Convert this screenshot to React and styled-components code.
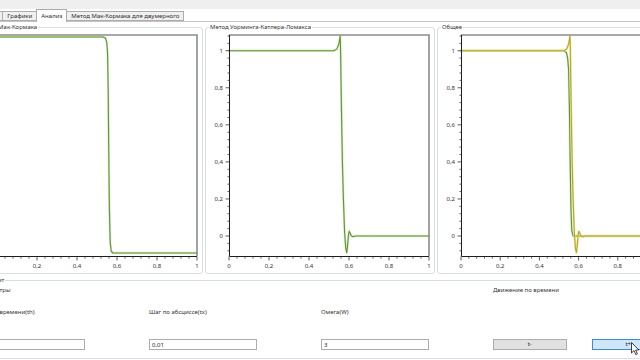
import React from 'react';
import styled, { createGlobalStyle } from 'styled-components';

const GlobalStyle = createGlobalStyle`
  html, body {
    margin: 0;
    padding: 0;
    background: #ffffff;
    overflow: hidden;
  }
  body {
    width: 640px;
    height: 360px;
    font-family: "Noto Sans", "Open Sans", sans-serif;
    color: #2e2e2e;
  }
`;

const Page = styled.div`
  width: 640px;
  height: 360px;
  overflow: hidden;
`;

// the window is wider than the shot, its left edge is cut off
const Window = styled.div`
  margin-left: -27px;
  width: 700px;
  display: flex;
  flex-direction: column;
`;

const TopBand = styled.div`
  height: 9px;
  background: #efefef;
`;

const TabStrip = styled.div`
  display: flex;
  align-items: flex-end;
  height: 12px;
  padding-left: 2px;
  background: #ffffff;
  border-bottom: 1px solid #c4c4c4;
`;

const Tab = styled.div`
  box-sizing: border-box;
  height: ${p => (p.active ? 13 : 10)}px;
  margin-left: -1px;
  margin-bottom: ${p => (p.active ? -1 : 0)}px;
  padding: ${p => (p.active ? '2px' : '0')} 4px 0;
  border: 1px solid #acacac;
  border-bottom: ${p => (p.active ? 'none' : '1px solid #acacac')};
  background: ${p => (p.active ? '#ffffff' : '#f0f0f0')};
  font-size: 6px;
  line-height: 8px;
  white-space: nowrap;
  position: relative;
  z-index: ${p => (p.active ? 1 : 0)};
`;

const Content = styled.div`
  display: flex;
  flex-direction: column;
  background: #ffffff;
`;

const ChartsRow = styled.div`
  display: flex;
  gap: 2px;
  margin-top: 2px;
`;

const GroupBox = styled.fieldset`
  box-sizing: border-box;
  width: ${p => p.width || 230}px;
  min-width: 0;
  margin: 0;
  padding: 0 1px 0;
  border: 1px solid #d9dee3;
  border-radius: 3px;
`;

const Title = styled.legend`
  font-size: 6px;
  line-height: 7px;
  padding: 0 1px;
  margin-left: ${p => p.indent || 2}px;
  color: #333333;
  white-space: nowrap;
`;

const CalcBox = styled(GroupBox)`
  margin-top: 3px;
  border-radius: 2px;
`;

const ParamGrid = styled.div`
  display: grid;
  grid-template-columns: repeat(4, 172px);
  grid-template-rows: 22px 32px 11px;
  padding: 1px 0 8px 2px;
`;

const Caption = styled.div`
  font-size: 6px;
  line-height: 10px;
  color: #333333;
  white-space: nowrap;
`;

const TextField = styled.input`
  box-sizing: border-box;
  width: 108px;
  height: 11px;
  margin: 0;
  padding: 0 2px;
  border: 1px solid #abadb3;
  background: #ffffff;
  font-family: "Noto Sans", "Open Sans", sans-serif;
  font-size: 6px;
  color: #222222;
  outline: none;
`;

const ButtonRow = styled.div`
  display: flex;
  gap: 25px;
`;

const Btn = styled.div`
  box-sizing: border-box;
  position: relative;
  width: 74px;
  height: 11px;
  border: 1px solid ${p => (p.hover ? '#3d8ad6' : '#adadad')};
  background: ${p => (p.hover ? '#cfe5f8' : '#e1e1e1')};
  font-size: 6px;
  line-height: 9px;
  text-align: center;
  color: #222222;
`;

const Pointer = styled.svg`
  position: absolute;
  left: 38px;
  top: 2px;
`;

const PLOT_L = 22;
const PLOT_T = 4;
const PLOT_B = 225;

const fmt = v => (v === 0 ? '0' : v === 1 ? '1' : v.toFixed(1).replace('.', ','));

function Chart({ yMin, yMax, plotW = 200, curves }) {
  const sx = v => PLOT_L + v * plotW;
  const sy = v => PLOT_T + ((yMax - v) / (yMax - yMin)) * (PLOT_B - PLOT_T);
  const R = PLOT_L + plotW;

  const yTicks = [];
  for (let k = Math.ceil(yMin * 25); k <= Math.floor(yMax * 25); k++) yTicks.push(k);
  const xTicks = [];
  for (let k = 0; k <= 25; k++) xTicks.push(k);

  const toPath = pts =>
    pts.map(([x, y], i) => `${i ? 'L' : 'M'}${sx(x).toFixed(2)},${sy(y).toFixed(2)}`).join(' ');

  return (
    <svg width="226" height="242" style={{ display: 'block' }}>
      <rect x={PLOT_L} y={PLOT_T} width={plotW} height={PLOT_B - PLOT_T} fill="#ffffff" />
      {curves.map((c, i) => (
        <g key={i} fill="none" strokeLinejoin="round" strokeLinecap="round">
          <path d={toPath(c.pts)} stroke={c.halo} strokeWidth="2.3" opacity="0.75" />
          <path d={toPath(c.pts)} stroke={c.color} strokeWidth="1.1" />
        </g>
      ))}
      <path d={`M${PLOT_L},${PLOT_T} H${R} V${PLOT_B}`} fill="none" stroke="#8c8c8c" strokeWidth="1.6" />
      <path d={`M${PLOT_L + 0.5},${PLOT_T} V${PLOT_B + 0.5} H${R}`} fill="none" stroke="#1e1e1e" strokeWidth="1" />
      {yTicks.map(k => {
        const y = sy(k / 25);
        const major = k % 5 === 0;
        return (
          <g key={'y' + k}>
            <line x1={PLOT_L + 0.5} x2={PLOT_L + 0.5 - (major ? 4 : 2)} y1={y} y2={y} stroke="#333" strokeWidth="0.8" />
            {major && (
              <text x={PLOT_L - 6} y={y + 2} fontSize="6" textAnchor="end" fill="#333">
                {fmt(k / 25)}
              </text>
            )}
          </g>
        );
      })}
      {xTicks.map(k => {
        const x = sx(k / 25);
        const major = k % 5 === 0;
        return (
          <g key={'x' + k}>
            <line x1={x} x2={x} y1={PLOT_B + 0.5} y2={PLOT_B + 0.5 + (major ? 4 : 2)} stroke="#333" strokeWidth="0.8" />
            {major && (
              <text x={x} y={PLOT_B + 12} fontSize="6" textAnchor="middle" fill="#333">
                {fmt(k / 25)}
              </text>
            )}
          </g>
        );
      })}
    </svg>
  );
}

const GREEN = { color: '#5f9634', halo: '#cde2b6' };
const GOLD = { color: '#b9a71c', halo: '#ebe2a0' };

const macCormack = [
  [0, 1], [0.53, 1], [0.542, 0.995], [0.549, 0.975], [0.553, 0.92], [0.556, 0.75],
  [0.559, 0.45], [0.562, 0.2], [0.566, 0.05], [0.571, 0.008], [0.58, 0], [1, 0],
];

const warming = [
  [0, 1], [0.525, 1], [0.54, 1.01], [0.55, 1.04], [0.556, 1.08], [0.558, 1.0],
  [0.562, 0.7], [0.567, 0.4], [0.572, 0.2], [0.578, 0.02], [0.584, -0.07],
  [0.589, -0.09], [0.594, -0.04], [0.598, 0.01], [0.601, 0.025], [0.606, 0.015],
  [0.612, 0], [0.62, -0.004], [0.635, 0], [1, 0],
];

const macCormackDip = [
  [0, 1], [0.525, 1], [0.538, 0.99], [0.544, 0.96], [0.549, 0.9], [0.553, 0.7],
  [0.557, 0.4], [0.561, 0.15], [0.565, 0.03], [0.572, 0], [1, 0],
];

export default function App() {
  return (
    <Page>
      <GlobalStyle />
      <Window>
        <TopBand />
        <TabStrip>
          <Tab>Расчет</Tab>
          <Tab>Графики</Tab>
          <Tab active>Анализ</Tab>
          <Tab>Метод Мак-Кормака для двумерного</Tab>
        </TabStrip>
        <Content>
          <ChartsRow>
            <GroupBox>
              <Title>Метод Мак-Кормака</Title>
              <Chart yMin={-0.014} yMax={1.009} curves={[{ ...GREEN, pts: macCormack }]} />
            </GroupBox>
            <GroupBox>
              <Title>Метод Уорминга-Катлера-Ломакса</Title>
              <Chart yMin={-0.108} yMax={1.085} curves={[{ ...GREEN, pts: warming }]} />
            </GroupBox>
            <GroupBox>
              <Title>Общее</Title>
              <Chart
                yMin={-0.108}
                yMax={1.085}
                plotW={196}
                curves={[{ ...GREEN, pts: macCormackDip }, { ...GOLD, pts: warming }]}
              />
            </GroupBox>
          </ChartsRow>
          <CalcBox width={700}>
            <Title indent={9}>Расчет</Title>
            <ParamGrid>
              <Caption>Параметры</Caption>
              <div />
              <div />
              <Caption>Движение по времени</Caption>
              <Caption>Шаг по времени(th)</Caption>
              <Caption>Шаг по абсциссе(tx)</Caption>
              <Caption>Омега(W)</Caption>
              <div />
              <TextField readOnly value="0,001" />
              <TextField readOnly value="0,01" />
              <TextField readOnly value="3" />
              <ButtonRow>
                <Btn>t-</Btn>
                <Btn hover>
                  t+
                  <Pointer width="9" height="14" viewBox="0 0 9 14">
                    <path
                      d="M0.5,0.5 L0.5,11 L3,8.6 L4.8,12.6 L6.4,11.9 L4.6,8 L7.8,8 Z"
                      fill="#ffffff"
                      stroke="#111111"
                      strokeWidth="0.8"
                      strokeLinejoin="round"
                    />
                  </Pointer>
                </Btn>
              </ButtonRow>
            </ParamGrid>
          </CalcBox>
        </Content>
      </Window>
    </Page>
  );
}
